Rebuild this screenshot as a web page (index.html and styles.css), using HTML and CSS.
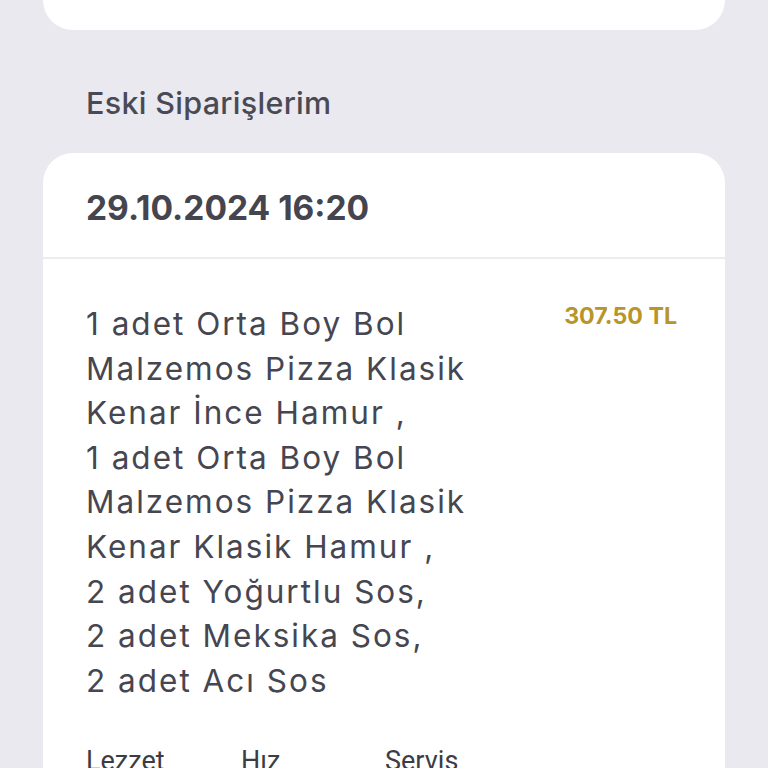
FILE: index.html
```html
<!DOCTYPE html>
<html lang="tr">
<head>
<meta charset="utf-8">
<link rel="stylesheet" href="styles.css">
</head>
<body>
<div class="page">
  <div class="card top-card"></div>
  <h2 class="section-title">Eski Siparişlerim</h2>
  <div class="card order">
    <div class="order-head">29.10.2024 16:20</div>
    <div class="order-body">
      <div class="items">
        <div class="item">1 adet Orta Boy Bol Malzemos Pizza Klasik Kenar İnce Hamur ,</div>
        <div class="item">1 adet Orta Boy Bol Malzemos Pizza Klasik Kenar Klasik Hamur ,</div>
        <div class="item">2 adet Yoğurtlu Sos,</div>
        <div class="item">2 adet Meksika Sos,</div>
        <div class="item">2 adet Acı Sos</div>
      </div>
      <div class="price">307.50 TL</div>
    </div>
    <div class="ratings">
      <span class="rate r1">Lezzet</span>
      <span class="rate r2">Hız</span>
      <span class="rate r3">Servis</span>
    </div>
  </div>
</div>
</body>
</html>
```
FILE: styles.css
```css
html, body {
  margin: 0;
  padding: 0;
  background: #e9e9ef;
  height: 768px;
  overflow: hidden;
}
.page {
  padding: 0 43px;
  font-family: "Inter", "Open Sans", sans-serif;
  color: #464651;
}
.card {
  background: #ffffff;
  border-radius: 30px;
}
.top-card {
  height: 30px;
  border-radius: 0 0 30px 30px;
}
.section-title {
  margin: 0;
  padding: 53px 0 0 43px;
  height: 70px;
  font-size: 30.5px;
  font-weight: 500;
  letter-spacing: 0.3px;
  line-height: 40px;
  color: #4a4a55;
}
.order {
  border-radius: 30px 30px 0 0;
}
.order-head {
  box-sizing: border-box;
  height: 106px;
  padding: 6px 0 0 43px;
  display: flex;
  align-items: center;
  font-size: 33.5px;
  font-weight: 700;
  color: #45454f;
  border-bottom: 2px solid #ebebf0;
}
.order-body {
  display: flex;
  justify-content: space-between;
  align-items: flex-start;
  padding: 43px 48px 0 43px;
}
.items {
  width: 400px;
  font-size: 31.5px;
  letter-spacing: 2px;
  line-height: 44.6px;
  color: #464651;
}
.price {
  font-size: 23.2px;
  font-weight: 700;
  color: #b8952a;
  line-height: 30px;
  margin-top: -1px;
}
.ratings {
  display: flex;
  padding: 42px 0 0 43px;
  font-family: "Roboto", sans-serif;
  font-size: 27px;
  color: #3c3c44;
}
.rate { display: block; }
.r1 { width: 155px; }
.r2 { width: 144px; }
```
